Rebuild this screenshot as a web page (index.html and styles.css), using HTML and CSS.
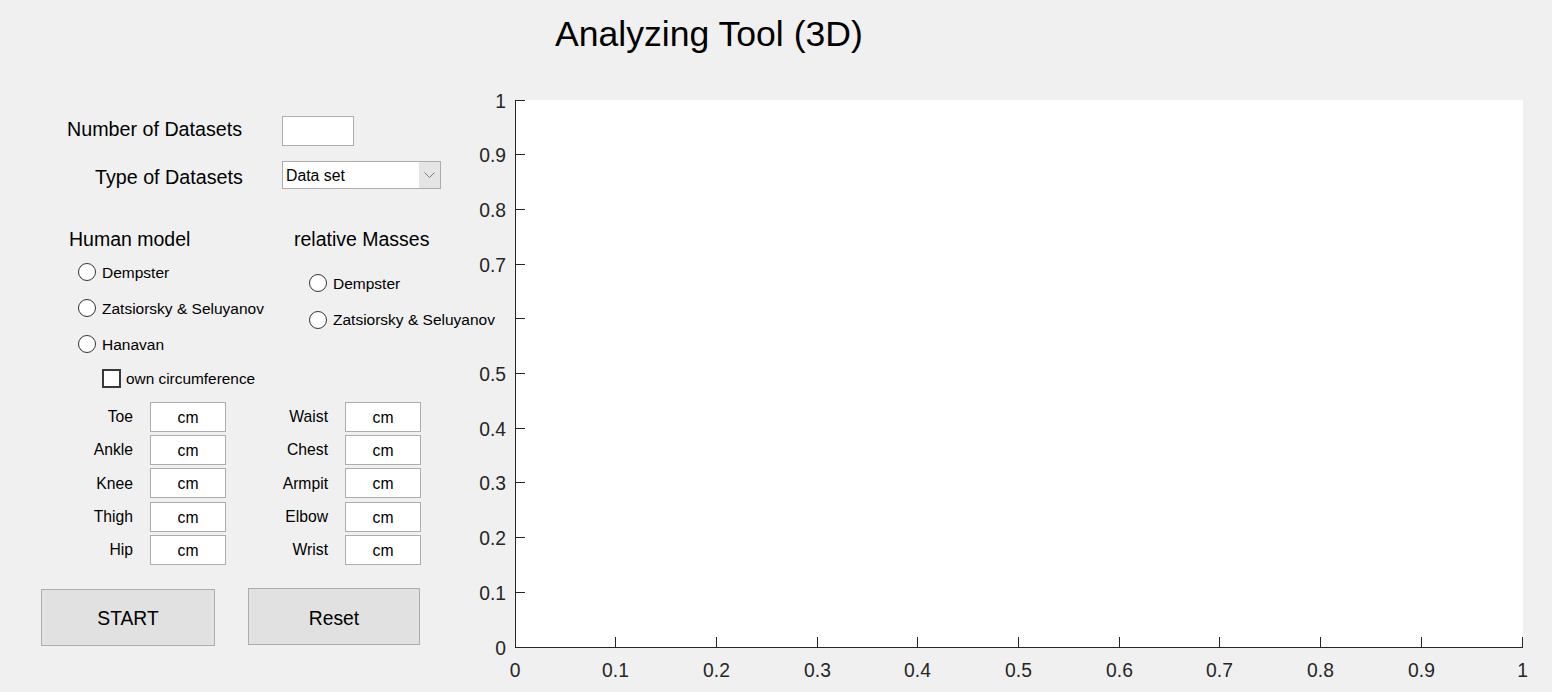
FILE: index.html
```html
<!DOCTYPE html>
<html lang="en">
<head>
<meta charset="utf-8">
<title>Analyzing Tool (3D)</title>
<link rel="stylesheet" href="styles.css">
</head>
<body>
<div class="app">
  <header class="header"><h1 class="title">Analyzing Tool (3D)</h1></header>
  <main class="main">
    <section class="panel">
      <div class="row row-num">
        <span class="lbl lbl-num">Number of Datasets</span>
        <div class="edit"></div>
      </div>
      <div class="row row-type">
        <span class="lbl lbl-type">Type of Datasets</span>
        <div class="popup">
          <span class="popup-text">Data set</span>
          <span class="popup-btn"><svg class="chev" width="11" height="6" viewBox="0 0 11 6"><path d="M0.5 0.5 L5.5 5.5 L10.5 0.5"/></svg></span>
        </div>
      </div>
      <div class="models">
        <div class="col col-human">
          <div class="heading">Human model</div>
          <div class="radios radios-human">
            <div class="radio"><span class="circle"></span><span>Dempster</span></div>
            <div class="radio"><span class="circle"></span><span>Zatsiorsky &amp; Seluyanov</span></div>
            <div class="radio"><span class="circle"></span><span>Hanavan</span></div>
          </div>
          <div class="check"><span class="box"></span><span>own circumference</span></div>
        </div>
        <div class="col col-mass">
          <div class="heading">relative Masses</div>
          <div class="radios radios-mass">
            <div class="radio"><span class="circle"></span><span>Dempster</span></div>
            <div class="radio"><span class="circle"></span><span>Zatsiorsky &amp; Seluyanov</span></div>
          </div>
        </div>
      </div>
      <div class="measures">
        <span class="mlbl">Toe</span><div class="mbox">cm</div><span class="mlbl">Waist</span><div class="mbox">cm</div>
        <span class="mlbl">Ankle</span><div class="mbox">cm</div><span class="mlbl">Chest</span><div class="mbox">cm</div>
        <span class="mlbl">Knee</span><div class="mbox">cm</div><span class="mlbl">Armpit</span><div class="mbox">cm</div>
        <span class="mlbl">Thigh</span><div class="mbox">cm</div><span class="mlbl">Elbow</span><div class="mbox">cm</div>
        <span class="mlbl">Hip</span><div class="mbox">cm</div><span class="mlbl">Wrist</span><div class="mbox">cm</div>
      </div>
      <div class="buttons">
        <button class="btn btn-start">START</button>
        <button class="btn btn-reset">Reset</button>
      </div>
    </section>
    <svg class="axes" width="1082" height="607" viewBox="0 0 1082 607">
      <rect class="plot" x="46" y="15" width="1007" height="547"/>
      <g class="ticks">
        <path d="M45 15.5H55 M45 69.5H55 M45 124.5H55 M45 179.5H55 M45 233.5H55 M45 288.5H55 M45 343.5H55 M45 397.5H55 M45 452.5H55 M45 507.5H55"/>
        <path d="M145.5 562V552 M246.5 562V552 M347.5 562V552 M447.5 562V552 M548.5 562V552 M649.5 562V552 M749.5 562V552 M850.5 562V552 M951.5 562V552 M1052.5 562V552"/>
        <path d="M45.5 15V563 M45 562.5H1053"/>
      </g>
      <g class="ylabels">
        <text x="36" y="22.8">1</text>
        <text x="36" y="76.8">0.9</text>
        <text x="36" y="131.8">0.8</text>
        <text x="36" y="186.8">0.7</text>
        <text x="36" y="295.8">0.5</text>
        <text x="36" y="350.8">0.4</text>
        <text x="36" y="404.8">0.3</text>
        <text x="36" y="459.8">0.2</text>
        <text x="36" y="514.8">0.1</text>
        <text x="36" y="569.8">0</text>
      </g>
      <g class="xlabels">
        <text x="45" y="592.3">0</text>
        <text x="145.5" y="592.3">0.1</text>
        <text x="246.5" y="592.3">0.2</text>
        <text x="347.5" y="592.3">0.3</text>
        <text x="447.5" y="592.3">0.4</text>
        <text x="548.5" y="592.3">0.5</text>
        <text x="649.5" y="592.3">0.6</text>
        <text x="749.5" y="592.3">0.7</text>
        <text x="850.5" y="592.3">0.8</text>
        <text x="951.5" y="592.3">0.9</text>
        <text x="1052.5" y="592.3">1</text>
      </g>
    </svg>
  </main>
</div>
</body>
</html>
```

FILE: styles.css
```css
* { box-sizing: border-box; margin: 0; padding: 0; }
html, body { width: 1552px; height: 692px; overflow: hidden; }
body {
  background: #f0f0f0;
  font-family: "Liberation Sans", Arial, sans-serif;
  color: #000;
}
.header { height: 85px; padding-top: 17.2px; padding-left: 555px; }
.title { font-size: 35.6px; line-height: 35.6px; font-weight: normal; white-space: nowrap; height: 36px; }

.main { display: flex; height: 607px; }
.panel { width: 470px; flex: none; }

.row { display: flex; align-items: flex-start; }
.lbl { font-size: 19.7px; line-height: 1; white-space: nowrap; }
.row-num { margin-top: 31px; height: 30px; }
.lbl-num { margin-left: 67px; width: 215px; margin-top: 4px; }
.edit { width: 72px; height: 30px; background: #fff; border: 1px solid #adadad; }
.row-type { margin-top: 15px; height: 28px; }
.lbl-type { margin-left: 95px; width: 187px; margin-top: 6.7px; }
.popup {
  width: 159px; height: 28px; background: #fff; border: 1px solid #adadad;
  display: flex;
}
.popup-text { flex: 1; font-size: 15.8px; line-height: 24px; padding-top: 2px; padding-left: 3px; }
.popup-btn {
  width: 21px; background: #e5e5e5;
  display: flex; align-items: center; justify-content: center;
}
.chev path { fill: none; stroke: #7a7a7a; stroke-width: 1; }

.models { display: flex; margin-top: 41.2px; }
.col-human { width: 294px; flex: none; padding-left: 69px; }
.col-mass { flex: none; }
.heading { font-size: 19.5px; line-height: 1; white-space: nowrap; }
.radios { display: flex; flex-direction: column; }
.radios-human { margin-top: 13.8px; margin-left: 9px; gap: 18px; }
.radios-mass { margin-top: 24.8px; margin-left: 15px; gap: 18.5px; }
.radio {
  display: flex; align-items: center; height: 18px;
  font-size: 15.5px; line-height: 1; white-space: nowrap;
}
.circle {
  flex: none; width: 18px; height: 18px; margin-right: 6px;
  border: 1px solid #333; border-radius: 50%; background: #fff;
}
.check {
  display: flex; align-items: center; margin-top: 15.5px; margin-left: 33px;
  height: 19px; font-size: 15.4px; line-height: 1; white-space: nowrap;
}
.box {
  flex: none; width: 19px; height: 19px; margin-right: 5px;
  border: 2px solid #3a3a3a; background: #fff;
}

.measures {
  display: grid;
  grid-template-columns: 133px 76px 85px 76px;
  grid-auto-rows: 30px;
  column-gap: 17px;
  row-gap: 3.25px;
  margin-top: 14px;
}
.mlbl {
  font-size: 15.7px; line-height: 1; text-align: right; align-self: center;
  white-space: nowrap;
}
.mbox {
  background: #fff; border: 1px solid #adadad; font-size: 15.7px; padding-top: 2px;
  display: flex; align-items: center; justify-content: center;
}

.buttons { display: flex; align-items: flex-start; margin-top: 23px; padding-left: 41px; gap: 33px; }
.btn {
  font-family: inherit; font-size: 19.3px; color: #000;
  background: #e1e1e1; border: 1px solid #adadad; height: 57px;
}
.btn-start { width: 174px; margin-top: 1px; padding-top: 4px; }
.btn-reset { width: 172px; padding-top: 5px; }

.axes { flex: none; display: block; }
.plot { fill: #fff; }
.ticks path { fill: none; stroke: #262626; stroke-width: 1; shape-rendering: crispEdges; }
.ylabels text, .xlabels text {
  font-family: "Liberation Sans", Arial, sans-serif; font-size: 19.3px; fill: #262626;
}
.ylabels text { text-anchor: end; }
.xlabels text { text-anchor: middle; }
```
